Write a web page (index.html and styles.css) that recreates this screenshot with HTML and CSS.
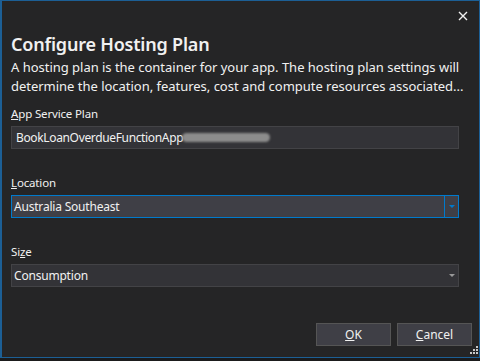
FILE: index.html
```html
<!DOCTYPE html>
<html lang="en">
<head>
    <meta charset="UTF-8">
    <title>Configure Hosting Plan</title>
    <link rel="stylesheet" href="styles.css">
</head>
<body>

    <div class="dialog">
        <div class="titlebar">
            <button class="close" aria-label="Close">
                <svg width="10" height="10" viewBox="0 0 10 10">
                    <path d="M1 1 L9 9 M9 1 L1 9" stroke="#f1f1f1" stroke-width="1.4" fill="none"/>
                </svg>
            </button>
        </div>

        <h1>Configure Hosting Plan</h1>
        <p class="desc">A hosting plan is the container for your app. The hosting plan settings will determine the location, features, cost and compute resources associated...</p>

        <div class="field">
            <label><u>A</u>pp Service Plan</label>
            <div class="textbox">BookLoanOverdueFunctionApp<span class="redacted"></span></div>
        </div>

        <div class="field">
            <label><u>L</u>ocation</label>
            <div class="combo focused">
                <span class="value">Australia Southeast</span>
                <span class="drop"><span class="arrow"></span></span>
            </div>
        </div>

        <div class="field">
            <label>Si<u>z</u>e</label>
            <div class="combo">
                <span class="value">Consumption</span>
                <span class="drop"><span class="arrow"></span></span>
            </div>
        </div>

        <div class="buttons">
            <button class="btn"><u>O</u>K</button>
            <button class="btn"><u>C</u>ancel</button>
        </div>

        <div class="grip">
            <svg width="10" height="10" viewBox="0 0 10 10" fill="#c8c8c8">
                <rect x="8" y="0" width="2" height="2"/>
                <rect x="5" y="3" width="2" height="2"/><rect x="8" y="3" width="2" height="2"/>
                <rect x="2" y="6" width="2" height="2"/><rect x="5" y="6" width="2" height="2"/><rect x="8" y="6" width="2" height="2"/>
            </svg>
        </div>
    </div>

</body>
</html>
```

FILE: styles.css
```css
body {
    margin: 0;
    background-color: #1b1b1c;
    font-family: "Noto Sans", "Open Sans", sans-serif;
    color: #f1f1f1;
}

.dialog {
    position: relative;
    box-sizing: border-box;
    width: 480px;
    height: 358px;
    background-color: #252526;
    border: 1px solid #1c5f95;
    border-left-width: 2px;
    padding: 0 20px 0 9px;
}

.titlebar {
    display: flex;
    justify-content: flex-end;
    height: 28px;
    margin-right: -14px;
}

.close {
    width: 20px;
    height: 20px;
    margin-top: 5px;
    padding: 0;
    background: none;
    border: none;
    display: flex;
    align-items: center;
    justify-content: center;
}

h1 {
    margin: 3px 0 0;
    font-size: 18px;
    font-weight: 600;
    line-height: 24px;
    letter-spacing: -0.2px;
    color: #f1f1f1;
}

.desc {
    margin: 2px -16px 0 0;
    font-size: 13px;
    line-height: 19px;
    letter-spacing: -0.02px;
    color: #f1f1f1;
}

.field {
    margin-top: 9px;
}

.field + .field {
    margin-top: 25px;
}

label {
    display: block;
    font-size: 11.5px;
    line-height: 18px;
    letter-spacing: -0.15px;
    margin-bottom: 3px;
}

.textbox {
    box-sizing: border-box;
    height: 23px;
    display: flex;
    align-items: center;
    padding: 0 4px;
    background-color: #333337;
    border: 1px solid #434346;
    font-size: 12px;
    letter-spacing: -0.35px;
}

.redacted {
    display: inline-block;
    width: 88px;
    height: 9px;
    margin-left: -1px;
    border-radius: 5px;
    background-color: #8c8c8c;
    filter: blur(1.2px);
}

.combo {
    box-sizing: border-box;
    height: 23px;
    display: flex;
    background-color: #333337;
    border: 1px solid #434346;
    font-size: 12px;
    letter-spacing: -0.2px;
}

.combo .value {
    flex: 1;
    display: flex;
    align-items: center;
    padding-left: 2px;
}

.combo .drop {
    width: 13px;
    display: flex;
    align-items: center;
    justify-content: center;
}

.arrow {
    width: 0;
    height: 0;
    border-left: 3px solid transparent;
    border-right: 3px solid transparent;
    border-top: 3px solid #999999;
}

.combo.focused {
    background-color: #3f3f46;
    border-color: #007acc;
}

.combo.focused .drop {
    border-left: 1px solid #007acc;
}

.combo.focused .arrow {
    border-top-color: #007acc;
}

.buttons {
    display: flex;
    justify-content: flex-end;
    gap: 6px;
    margin-top: 36px;
    margin-right: -13px;
}

.btn {
    box-sizing: border-box;
    width: 75px;
    height: 23px;
    background-color: #3f3f46;
    border: 1px solid #555555;
    color: #f1f1f1;
    font-family: inherit;
    font-size: 12px;
    padding: 0;
}

.grip {
    position: absolute;
    right: 1px;
    bottom: 1px;
    line-height: 0;
}
```
